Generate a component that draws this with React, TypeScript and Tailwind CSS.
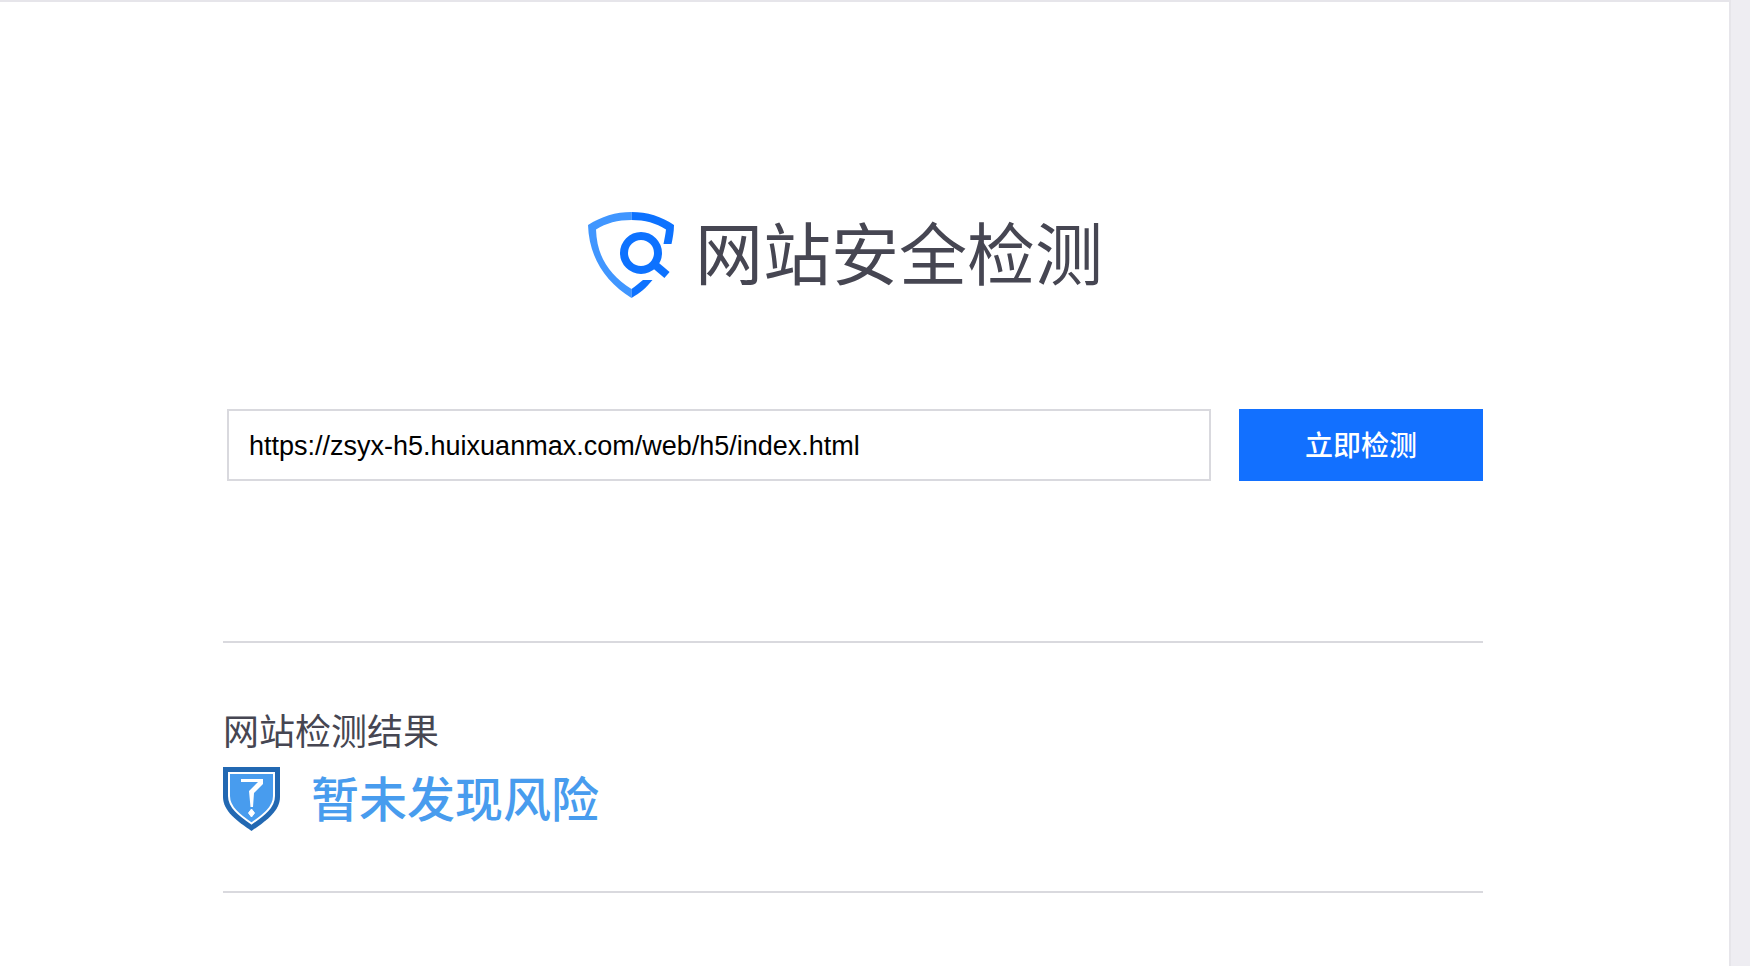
import React, { useState } from 'react';

const SearchShieldIcon: React.FC = () => (
  <svg width="88" height="88" viewBox="-1 0 88 88" fill="none" aria-hidden="true">
    <path
      d="M43.500 0C28 0 13 4.500 0 13C1 46 18 70 43.500 86V77C22 63 9 46 8 17.500C18 11 30 8 43.500 8Z"
      fill="#4096ff"
    />
    <path
      d="M43.500 0C59 0 74 4.500 86 13C86 20 84.500 27 83.500 32H75.500C76.500 27 77.500 22 78 17.500C68 11 57 8 43.500 8Z"
      fill="#0d72ff"
    />
    <path d="M43.500 86V77C48 74 51 71 55 68H64.500C58 76 52 81 43.500 86Z" fill="#0d72ff" />
    <circle cx="53" cy="41" r="17" stroke="#0d72ff" strokeWidth="8" />
    <path d="M66 52L79 63" stroke="#0d72ff" strokeWidth="8" />
  </svg>
);

const ResultShieldIcon: React.FC = () => (
  <svg width="58" height="64" viewBox="0 0 58 64" aria-hidden="true">
    <path d="M0 0H57V30C57 44 43 54 28.500 64C14 54 0 44 0 30Z" fill="#2268b2" />
    <path
      d="M6 6H51V29C51 40 41 48 28.500 56.500C16 48 6 40 6 29Z"
      fill="#489cee"
      stroke="#fff"
      strokeWidth="2"
    />
    <path d="M18 12H40V17L31 26L30 40H27.500L26 24L35 15H18Z" fill="#fff" />
    <path d="M28.500 42L31.500 46L28.500 50L25.500 46Z" fill="#fff" stroke="#fff" />
  </svg>
);

const App: React.FC = () => {
  const [url, setUrl] = useState('https://zsyx-h5.huixuanmax.com/web/h5/index.html');

  return (
    <div className="min-h-screen bg-[#eeedf2] pr-[19px] font-['Liberation_Sans','Noto_Sans_CJK_SC',sans-serif]">
      <main className="min-h-screen border-t-2 border-r-2 border-[#e6e5ea] bg-white pt-[210px] pr-[246px] pb-16 pl-[223px] text-[#464652]">
        <header className="flex items-center justify-center gap-5 pr-4">
          <SearchShieldIcon />
          <h1 className="text-[68px] leading-[88px]">网站安全检测</h1>
        </header>

        <form className="mt-[109px] flex gap-7 pl-1" onSubmit={(e) => e.preventDefault()}>
          <input
            type="text"
            aria-label="网站地址"
            value={url}
            onChange={(e) => setUrl(e.target.value)}
            className="h-[72px] min-w-0 flex-1 border-2 border-[#d9d9de] px-5 pt-0.5 text-[27px] text-black outline-none"
          />
          <button type="submit" className="h-[72px] w-[244px] bg-[#1270ff] pt-1 text-[28px] font-medium text-white">
            立即检测
          </button>
        </form>

        <section className="mt-40 border-y-2 border-[#d9d9de] pt-[66px] pb-[60px]">
          <h2 className="text-[36px] leading-[48px]">网站检测结果</h2>
          <div className="mt-[10px] flex items-center gap-[30px]">
            <ResultShieldIcon />
            <p className="pt-1 text-[48px] leading-[60px] font-medium text-[#489cee]">暂未发现风险</p>
          </div>
        </section>
      </main>
    </div>
  );
};

export default App;
